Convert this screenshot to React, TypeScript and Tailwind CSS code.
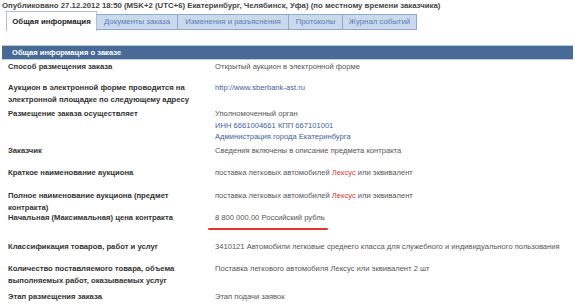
function Lexus() {
  return <span className="text-[#e8322b]">Лексус</span>;
}

export default function App() {
  const data = [
    { label: 'Способ размещения заказа', h: 21, value: <span>Открытый аукцион в электронной форме</span> },
    {
      label: 'Аукцион в электронной форме проводится на электронной площадке по следующему адресу',
      h: 26,
      value: <span className="text-[#3d5f9e]">http://www.sberbank-ast.ru</span>,
    },
    {
      label: 'Размещение заказа осуществляет',
      h: 37,
      value: (
        <div className="flex flex-col">
          <span>Уполномоченный орган</span>
          <span className="text-[#3d5f9e]">ИНН 6661004661 КПП 667101001</span>
          <span className="text-[#3d5f9e]">Администрация города Екатеринбурга</span>
        </div>
      ),
    },
    { label: 'Заказчик', h: 22, value: <span>Сведения включены в описание предмета контракта</span> },
    {
      label: 'Краткое наименование аукциона',
      h: 23,
      value: (
        <span>
          поставка легковых автомобилей <Lexus /> или эквивалент
        </span>
      ),
    },
    {
      label: 'Полное наименование аукциона (предмет контракта)',
      h: 22,
      value: (
        <span>
          поставка легковых автомобилей <Lexus /> или эквивалент
        </span>
      ),
    },
    {
      label: 'Начальная (Максимальная) цена контракта',
      h: 29,
      value: (
        <span className="relative">
          8 800 000,00 Российский рубль
          <span className="absolute -left-[7px] -right-[3px] top-[15px] h-[2px] rounded-full bg-[#e8322b]" />
        </span>
      ),
    },
    {
      label: 'Классификация товаров, работ и услуг',
      h: 22,
      value: <span>3410121 Автомобили легковые среднего класса для служебного и индивидуального пользования</span>,
    },
    {
      label: 'Количество поставляемого товара, объема выполняемых работ, оказываемых услуг',
      h: 28,
      value: <span>Поставка легкового автомобиля Лексус или эквивалент 2 шт</span>,
    },
    { label: 'Этап размещения заказа', h: 20, value: <span>Этап подачи заявок</span> },
  ];

  const tabs = [
    { t: 'Документы заказа', w: 81 },
    { t: 'Изменения и разъяснения', w: 111 },
    { t: 'Протоколы', w: 54 },
    { t: 'Журнал событий', w: 74 },
  ];

  return (
    <div
      className="h-[305px] w-[575px] overflow-hidden bg-white leading-[11.5px]"
      style={{ fontFamily: '"Liberation Sans", Arial, sans-serif' }}
    >
      <div className="h-[11px] whitespace-nowrap pl-[2px] text-[7.8px] leading-[12px] font-bold text-[#444]">
        Опубликовано 27.12.2012 18:50 (MSK+2 (UTC+6) Екатеринбург, Челябинск, Уфа) (по местному времени заказчика)
      </div>

      <div className="flex h-[20px] items-start pl-[6px] text-[7.8px]">
        <div className="flex h-[20px] w-[91px] items-center justify-center border border-b-0 border-[#a9bfdc] bg-white font-bold text-[#222]">
          Общая информация
        </div>
        <div className="mt-[3px] flex">
          {tabs.map((x) => (
            <div
              key={x.t}
              className="flex h-[16px] items-center justify-center border border-l-0 border-[#8faad0] bg-[#cbd9ec] text-[#5a7db8]"
              style={{ width: x.w }}
            >
              {x.t}
            </div>
          ))}
        </div>
      </div>

      <div className="mx-[2px] mt-[14px] h-[15px] border-y border-[#b9cce3] bg-[#476a96] pl-[10px] text-[7.6px] leading-[13px] font-bold text-white">
        Общая информация о заказе
      </div>

      <div className="pt-[1px]">
        {data.map((r) => (
          <div key={r.label} className="flex" style={{ height: r.h }}>
            <div className="w-[215px] shrink-0 pl-[8px] pr-[20px] text-[7.7px] font-bold text-[#333]">{r.label}</div>
            <div className="text-[7.6px] text-[#555]">{r.value}</div>
          </div>
        ))}
      </div>
    </div>
  );
}
